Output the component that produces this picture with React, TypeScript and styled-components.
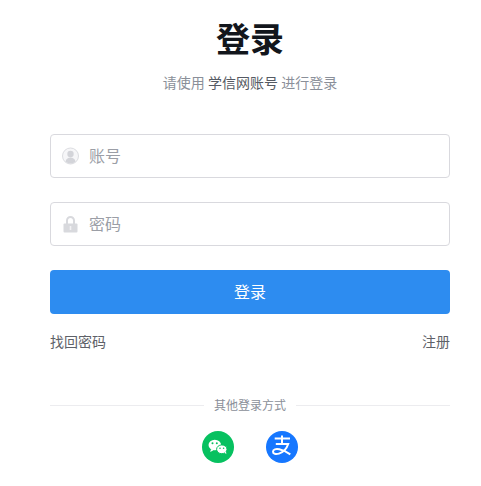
import styled, { createGlobalStyle } from 'styled-components'

const Global = createGlobalStyle`
  html, body { margin: 0; padding: 0; background: #fff; }
  body { font-family: "Noto Sans CJK SC", "Liberation Sans", sans-serif; }
`

const Page = styled.div`
  width: 400px;
  padding: 16px 50px 0;
`

const Title = styled.h1`
  margin: 0;
  text-align: center;
  font-size: 34px;
  line-height: 44px;
  font-weight: 700;
  color: #12161c;
`

const Subtitle = styled.p`
  margin: 11px 0 0;
  text-align: center;
  font-size: 14px;
  line-height: 22px;
  color: #8a8f99;
  strong { font-weight: 400; color: #555a63; }
`

const Form = styled.div`
  margin-top: 41px;
  display: flex;
  flex-direction: column;
  gap: 24px;
`

const Field = styled.div`
  box-sizing: border-box;
  height: 44px;
  border: 1px solid #d9d9de;
  border-radius: 4px;
  display: flex;
  align-items: center;
  gap: 9px;
  padding-left: 11px;
`

const FieldIcon = styled.svg`
  width: 18px;
  height: 18px;
  flex: none;
`

const Placeholder = styled.span`
  font-size: 16px;
  line-height: 22px;
  padding-bottom: 3px;
  color: #9b9ea6;
`

const Submit = styled.button`
  height: 44px;
  border: none;
  border-radius: 4px;
  padding: 0 0 3px;
  background: #2d8cf0;
  color: #fff;
  font: inherit;
  font-size: 16px;
`

const Links = styled.div`
  margin-top: 16px;
  display: flex;
  justify-content: space-between;
  font-size: 14px;
  line-height: 22px;
  color: #5e6168;
`

const Divider = styled.div`
  margin-top: 43px;
  display: flex;
  align-items: center;
  gap: 10px;
  font-size: 12px;
  line-height: 20px;
  color: #8a8f99;
  &::before, &::after { content: ''; flex: 1; height: 1px; background: #ececef; }
`

const Socials = styled.div`
  margin-top: 16px;
  display: flex;
  justify-content: center;
  gap: 32px;
`

const Social = styled.svg`
  width: 32px;
  height: 32px;
`

export default function App() {
  return (
    <Page>
      <Global />
      <Title>登录</Title>
      <Subtitle>请使用 <strong>学信网账号</strong> 进行登录</Subtitle>
      <Form>
        <Field>
          <FieldIcon viewBox="0 0 18 18">
            <circle cx="8.5" cy="9" r="8" fill="#f6f6f8" stroke="#dcdde1" strokeWidth="1" />
            <circle cx="8.5" cy="7" r="3.2" fill="#d3d4d9" />
            <path d="M3.500 14.500c.8-3 2.800-4 5-4s4.200 1 5 4a7 7 0 0 1-10 0z" fill="#d3d4d9" />
          </FieldIcon>
          <Placeholder>账号</Placeholder>
        </Field>
        <Field>
          <FieldIcon viewBox="0 0 18 18">
            <path d="M5 9V5.500a3.500 3.500 0 0 1 7 0V9" fill="none" stroke="#d8d9dd" strokeWidth="2" />
            <rect x="1.500" y="8.500" width="14" height="9" rx="1" fill="#d8d9dd" />
            <rect x="7.700" y="11" width="1.600" height="4" fill="#f2f2f4" />
          </FieldIcon>
          <Placeholder>密码</Placeholder>
        </Field>
        <Submit>登录</Submit>
      </Form>
      <Links>
        <span>找回密码</span>
        <span>注册</span>
      </Links>
      <Divider>其他登录方式</Divider>
      <Socials>
        <Social viewBox="0 0 32 32">
          <circle cx="16" cy="16" r="16" fill="#07c160" />
          <ellipse cx="12.800" cy="14" rx="6.300" ry="5.300" fill="#fff" />
          <path d="M9 18l-.8 3 3.300-1.700z" fill="#fff" />
          <ellipse cx="19.800" cy="18.300" rx="5.200" ry="4.400" fill="#fff" stroke="#07c160" strokeWidth="1" />
          <path d="M22.500 21.500l1.800 1.800-.3-2.800z" fill="#fff" />
          <circle cx="10.500" cy="12.300" r="1" fill="#07c160" />
          <circle cx="14.800" cy="12.300" r="1" fill="#07c160" />
          <circle cx="18" cy="17.200" r=".8" fill="#07c160" />
          <circle cx="21.600" cy="17.200" r=".8" fill="#07c160" />
        </Social>
        <Social viewBox="0 0 32 32">
          <circle cx="16" cy="16" r="16" fill="#1677ff" />
          <path d="M8.700 7.500h15.300M16 4.500v8.500M9.800 13h12.400c-1.600 4.800-5 8.200-9.200 9.600-3.200 1-6 .2-6-1.900 0-2.300 3-3.200 6.300-2.400 4.800 1.100 8.500 3.300 11 5" fill="none" stroke="#fff" strokeWidth="2" />
        </Social>
      </Socials>
    </Page>
  )
}
